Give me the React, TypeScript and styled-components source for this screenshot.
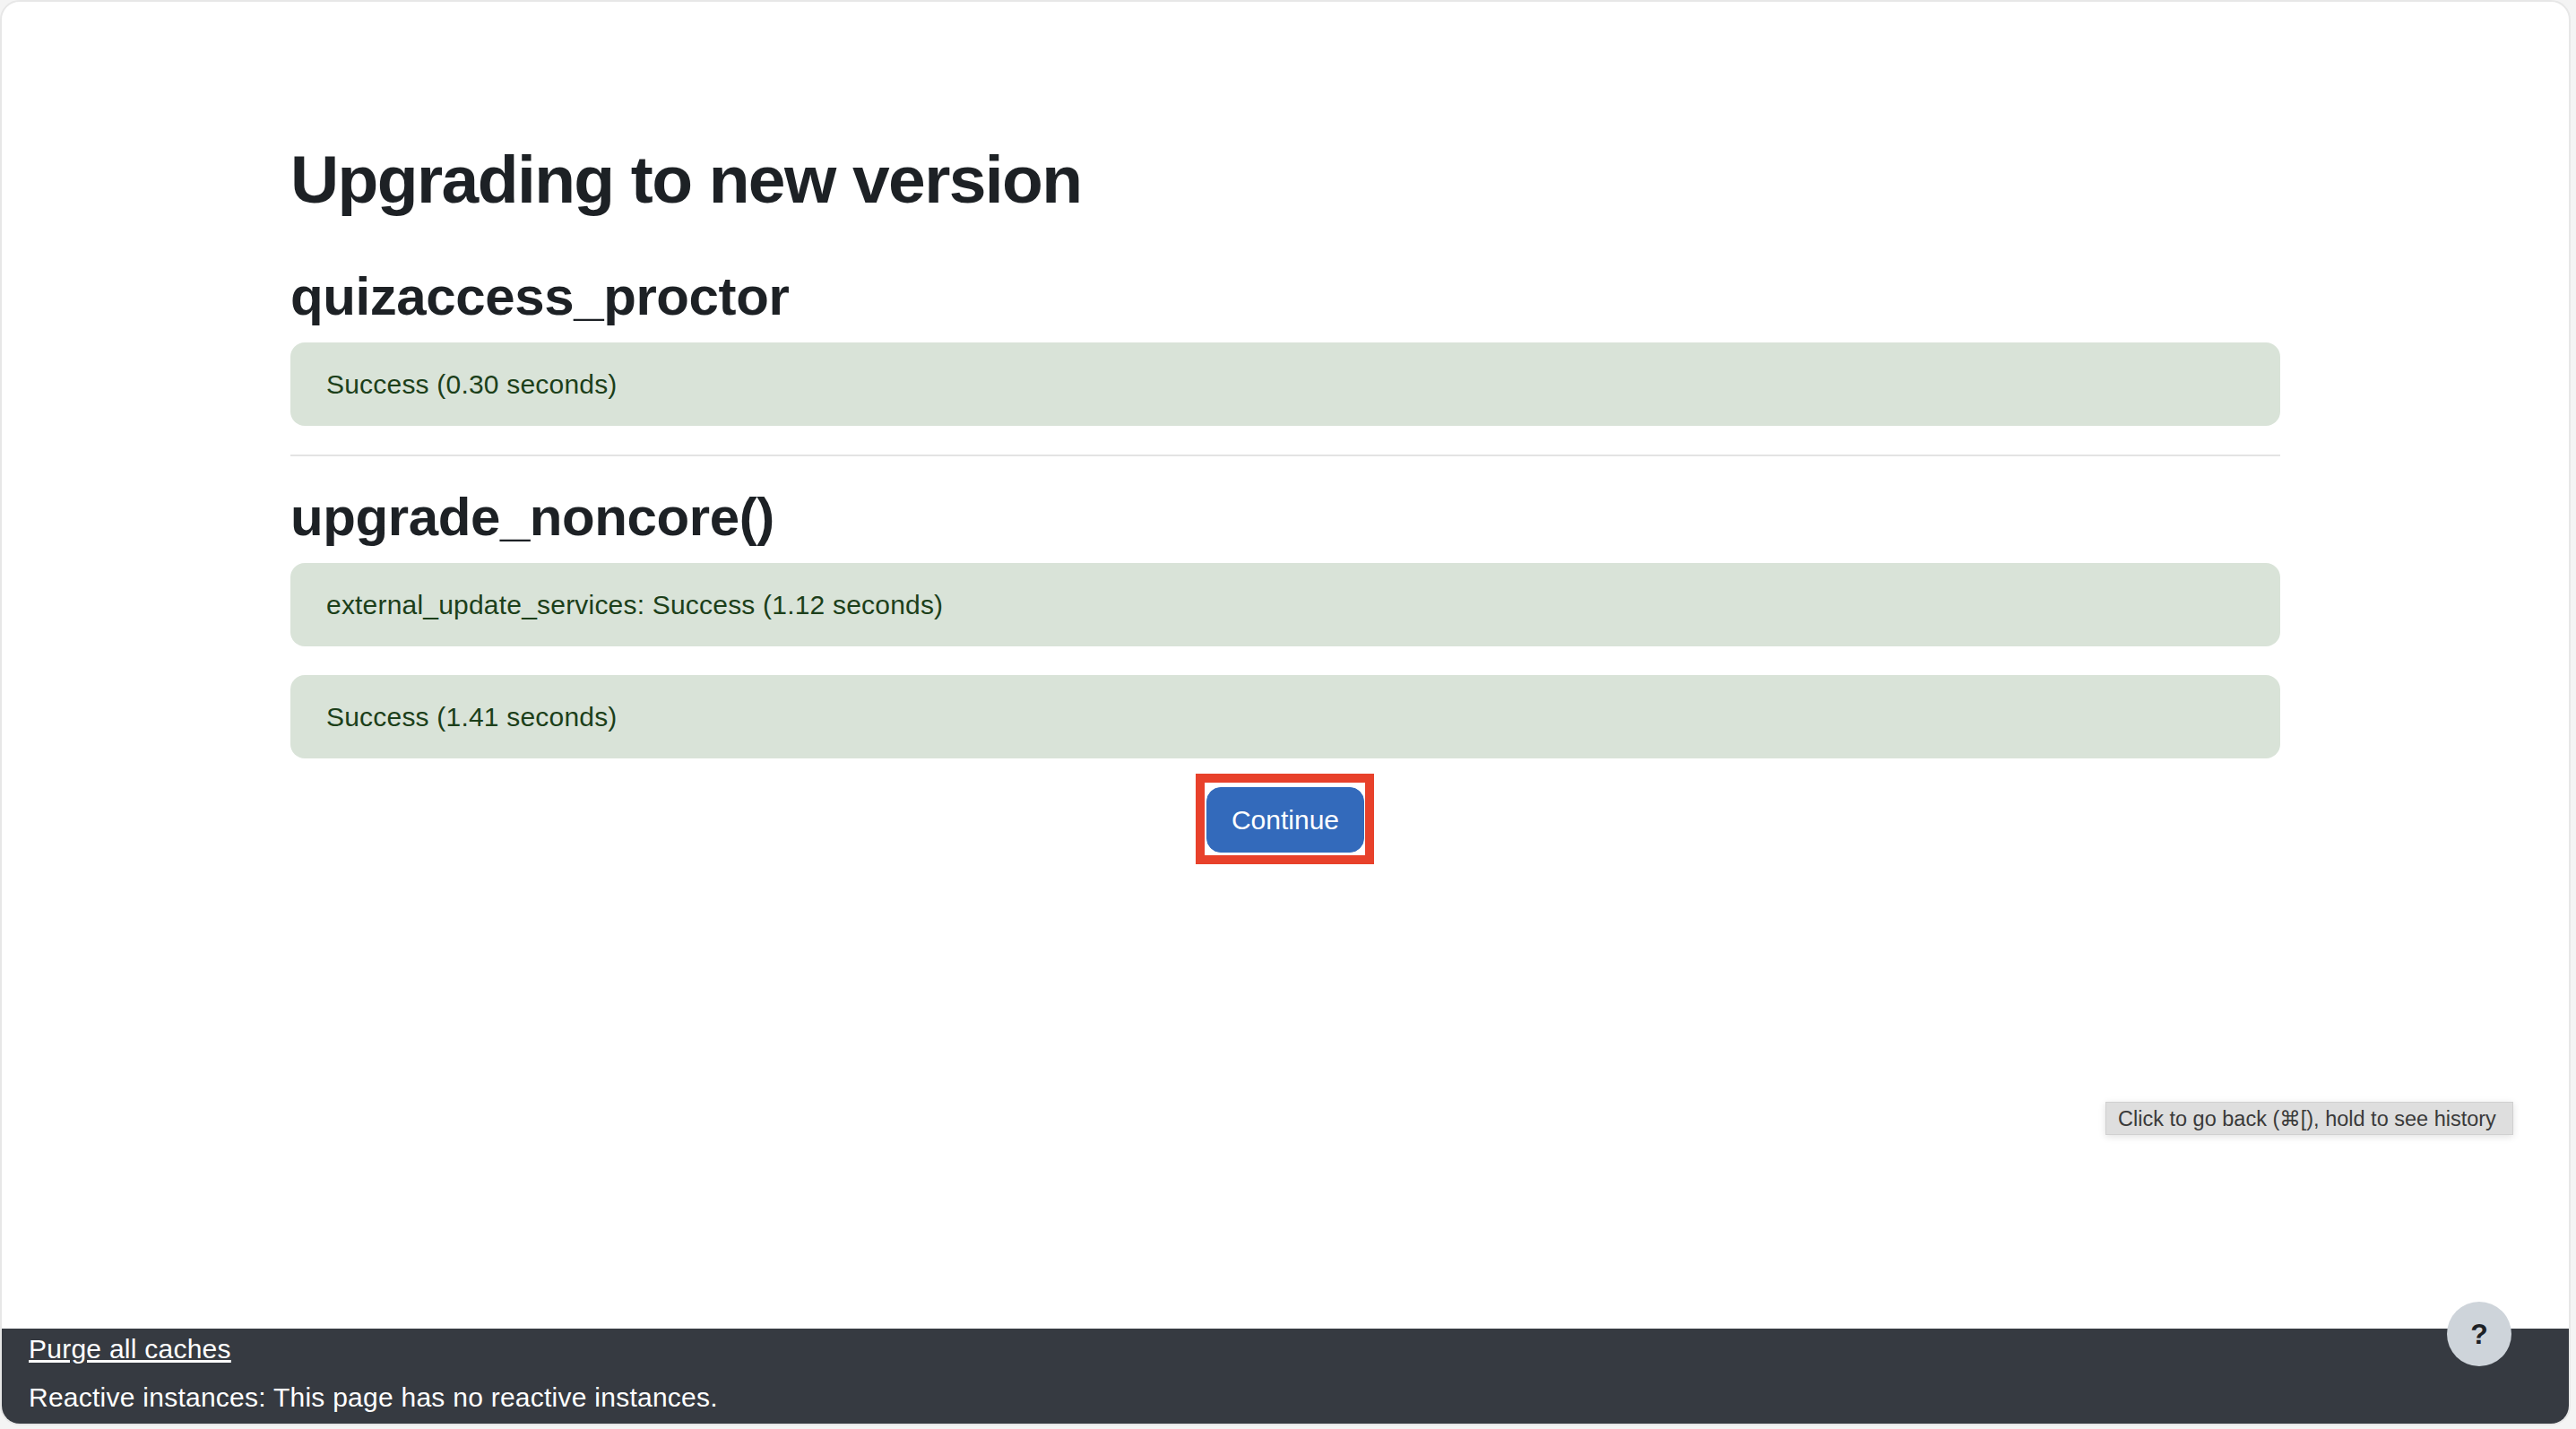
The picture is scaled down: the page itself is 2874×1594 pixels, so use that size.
import React from "react";
import styled, { createGlobalStyle } from "styled-components";

const GlobalStyle = createGlobalStyle`
  html, body {
    margin: 0;
    padding: 0;
    background: #f4f4f4;
  }
  body {
    font-family: "Liberation Sans", Arial, "DejaVu Sans", sans-serif;
    color: #1d2125;
  }
  * {
    box-sizing: border-box;
  }
`;

const Window = styled.div`
  position: relative;
  width: 2868px;
  height: 1590px;
  display: flex;
  flex-direction: column;
  background: #ffffff;
  border: 2px solid #e7e7e7;
  border-radius: 22px;
  overflow: hidden;
`;

const Main = styled.main`
  flex: 1;
  padding: 153px 322px 0 322px;
`;

const PageTitle = styled.h1`
  margin: 0 0 50px;
  font-size: 75px;
  line-height: 90px;
  font-weight: 700;
  letter-spacing: -1.6px;
  color: #1d2125;
`;

const SectionTitle = styled.h2`
  margin: 0 0 15px;
  font-size: 60px;
  line-height: 72px;
  font-weight: 700;
  letter-spacing: -0.4px;
  color: #1d2125;
`;

const Alert = styled.div`
  margin: 0 0 32px;
  padding: 24px 40px;
  font-size: 30px;
  line-height: 45px;
  letter-spacing: 0.2px;
  color: #1c3f1a;
  background: #d9e3d8;
  border-radius: 16px;
`;

const Divider = styled.hr`
  margin: 0 0 32px;
  border: 0;
  height: 2px;
  background: #e3e3e3;
`;

const Actions = styled.div`
  display: flex;
  justify-content: center;
`;

/* red annotation frame drawn over the button */
const Highlight = styled.span`
  position: relative;
  display: inline-flex;

  &::after {
    content: "";
    position: absolute;
    top: -15px;
    right: -11px;
    bottom: -13px;
    left: -12px;
    border: 10px solid #e8412b;
    pointer-events: none;
  }
`;

const PrimaryButton = styled.button`
  font-family: "Liberation Sans", Arial, sans-serif;
  font-size: 30px;
  line-height: 45px;
  padding: 13px 27px;
  color: #ffffff;
  background: #336abb;
  border: 1px solid #336abb;
  border-radius: 16px;
  cursor: pointer;
`;

const Footer = styled.footer`
  background: #363a41;
  color: #ffffff;
  padding: 0 30px 7px;
  font-size: 30px;
  line-height: 45px;
  letter-spacing: 0.25px;
  display: flex;
  flex-direction: column;
  gap: 9px;
`;

const FooterLink = styled.a`
  color: #ffffff;
  text-decoration: underline;
  align-self: flex-start;
`;

const HelpButton = styled.button`
  position: absolute;
  right: 64px;
  bottom: 64px;
  width: 72px;
  height: 72px;
  border-radius: 50%;
  border: 0;
  background: #ced4da;
  color: #1d2125;
  font-family: "Liberation Sans", Arial, sans-serif;
  font-size: 32px;
  font-weight: 700;
  display: flex;
  align-items: center;
  justify-content: center;
  padding: 0;
`;

const Tooltip = styled.div`
  position: absolute;
  left: 2347px;
  top: 1227px;
  width: 455px;
  height: 37px;
  padding: 0 13px;
  display: flex;
  align-items: center;
  font-family: "Liberation Sans", "DejaVu Sans", sans-serif;
  font-size: 23.5px;
  color: #3a3a3a;
  background: #dedede;
  border: 1px solid #d0d0d0;
  box-shadow: 0 2px 8px rgba(0, 0, 0, 0.12);
  white-space: nowrap;
`;

const sections = [
  {
    title: "quizaccess_proctor",
    results: ["Success (0.30 seconds)"],
  },
  {
    title: "upgrade_noncore()",
    results: [
      "external_update_services: Success (1.12 seconds)",
      "Success (1.41 seconds)",
    ],
  },
];

export default function App() {
  return (
    <>
      <GlobalStyle />
      <Window>
        <Main>
          <PageTitle>Upgrading to new version</PageTitle>
          {sections.map((section, i) => (
            <section key={section.title}>
              <SectionTitle>{section.title}</SectionTitle>
              {section.results.map((r) => (
                <Alert key={r}>{r}</Alert>
              ))}
              {i < sections.length - 1 && <Divider />}
            </section>
          ))}
          <Actions>
            <Highlight>
              <PrimaryButton>Continue</PrimaryButton>
            </Highlight>
          </Actions>
        </Main>
        <Footer>
          <FooterLink href="#">Purge all caches</FooterLink>
          <span>Reactive instances: This page has no reactive instances.</span>
        </Footer>
        <Tooltip>Click to go back (⌘[), hold to see history</Tooltip>
        <HelpButton aria-label="Help">?</HelpButton>
      </Window>
    </>
  );
}
